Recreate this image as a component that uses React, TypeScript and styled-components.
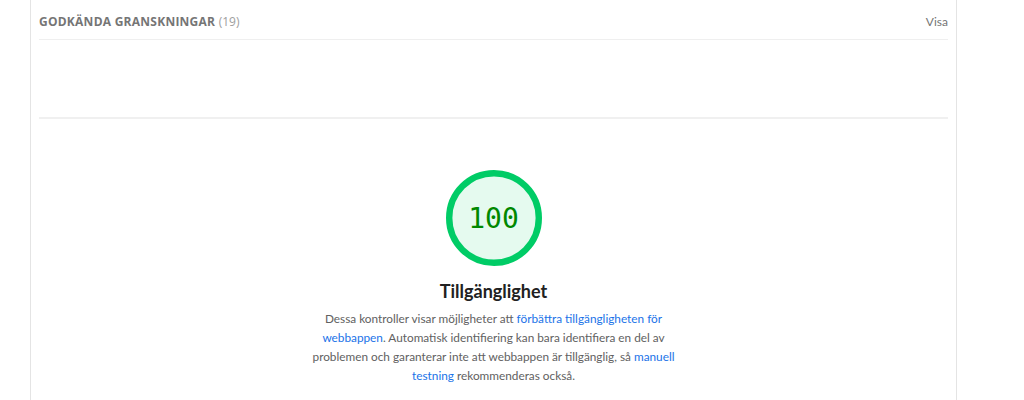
import React from "react";
import styled, { createGlobalStyle } from "styled-components";

const Global = createGlobalStyle`
  html, body { margin: 0; padding: 0; background: #fff; }
  body { font-family: Lato, "Open Sans", "Liberation Sans", sans-serif; }
`;

const Page = styled.div`
  width: 1024px;
  height: 400px;
  overflow: hidden;
  background: #fff;
`;

const Panel = styled.div`
  margin-left: 30px;
  width: 909px;
  height: 400px;
  border-left: 1px solid #e4e4e4;
  border-right: 1px solid #e4e4e4;
  padding: 0 8px;
  box-sizing: content-box;
`;

const GroupHeader = styled.div`
  display: flex;
  align-items: center;
  justify-content: space-between;
  height: 40px;
  border-bottom: 1px solid #efefef;
  padding-top: 3px;
  box-sizing: border-box;
`;

const GroupTitle = styled.span`
  font-family: "Open Sans", Lato, sans-serif;
  font-size: 12px;
  font-weight: 700;
  letter-spacing: 0.25px;
  color: #757575;
  text-transform: uppercase;
`;

const Count = styled.span`
  font-weight: 400;
  color: #9e9e9e;
  letter-spacing: 0;
`;

const Toggle = styled.span`
  font-size: 12px;
  color: #757575;
`;

const Divider = styled.div`
  margin-top: 77px;
  height: 2px;
  background: #f0f0f0;
`;

const CategoryHeader = styled.div`
  display: flex;
  flex-direction: column;
  align-items: center;
  padding-top: 51px;
`;

const Gauge = styled.div`
  position: relative;
  width: 96px;
  height: 96px;
`;

const GaugeValue = styled.div`
  position: absolute;
  inset: 0;
  display: flex;
  align-items: center;
  justify-content: center;
  font-family: "DejaVu Sans Mono", "Liberation Mono", monospace;
  font-size: 28px;
  color: #008800;
`;

const Title = styled.h2`
  margin: 13px 0 0;
  font-size: 18px;
  font-weight: 700;
  line-height: 24px;
  color: #212121;
`;

const Description = styled.p`
  margin: 6px 0 0;
  width: 380px;
  text-align: center;
  font-size: 11.8px;
  line-height: 19px;
  color: #616161;
`;

const Link = styled.a`
  color: #1a73e8;
  text-decoration: none;
`;

export default function App() {
  return (
    <Page>
      <Global />
      <Panel>
        <GroupHeader>
          <GroupTitle>
            Godkända granskningar <Count>(19)</Count>
          </GroupTitle>
          <Toggle>Visa</Toggle>
        </GroupHeader>
        <Divider />
        <CategoryHeader>
          <Gauge>
            <svg width="96" height="96" viewBox="0 0 120 120">
              <circle cx="60" cy="60" r="56" fill="rgba(0,204,102,0.1)" stroke="#00cc66" strokeWidth="8" />
            </svg>
            <GaugeValue>100</GaugeValue>
          </Gauge>
          <Title>Tillgänglighet</Title>
          <Description>
            Dessa kontroller visar möjligheter att <Link href="#">förbättra tillgängligheten för webbappen</Link>. Automatisk identifiering kan bara identifiera en del av problemen och garanterar inte att webbappen är tillgänglig, så <Link href="#">manuell testning</Link> rekommenderas också.
          </Description>
        </CategoryHeader>
      </Panel>
    </Page>
  );
}
